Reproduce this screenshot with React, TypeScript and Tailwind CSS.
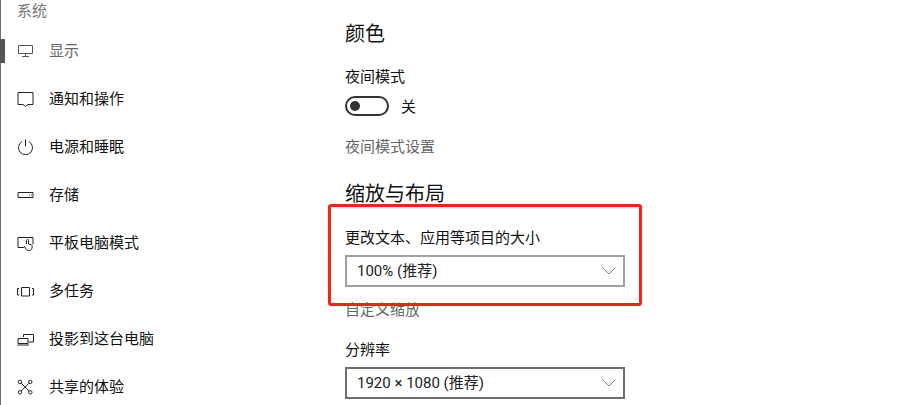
import { ChevronDown } from 'lucide-react'
import type { ReactNode } from 'react'

const stroke = { fill: 'none', stroke: 'currentColor', strokeWidth: 1 }

const navItems: { label: string; icon: ReactNode; active?: boolean }[] = [
  {
    label: '显示',
    active: true,
    icon: <path d="M1.500 2.500h14v8h-14zM8.500 10.500v2.500M5 13.500h7" />,
  },
  {
    label: '通知和操作',
    icon: <path d="M1 1.500h15v12h-5l-2.500 2-2.500-2H1z" />,
  },
  {
    label: '电源和睡眠',
    icon: <path d="M8.500 .5v7M5 2.600a7 7 0 1 0 7 0" />,
  },
  {
    label: '存储',
    icon: <path d="M1 5.500h15v5H1zM12 8h.8M14 8h.8" />,
  },
  {
    label: '平板电脑模式',
    icon: <path d="M7 12.500H1V2.500h15v7M9.500 9V5.500a1 1 0 0 1 2 0V9l2.500.7c1 .3 1.200 1 1.200 2 0 2-1 3.800-3.400 3.800-2 0-2.800-1-3.400-2.200L7.500 11" />,
  },
  {
    label: '多任务',
    icon: <path d="M4.500 4.500h8v8.500h-8zM2 5.500H.5v6.500H2M15 5.500h1.500v6.500H15" />,
  },
  {
    label: '投影到这台电脑',
    icon: <path d="M6.500 6V3.500h10v7.500h-5M1 7.500h10v5H1zM.5 14h11.500" />,
  },
  {
    label: '共享的体验',
    icon: (
      <>
        <circle cx="2.900" cy="2.900" r="1.700" />
        <circle cx="13.300" cy="2.900" r="1.700" />
        <circle cx="2.900" cy="13.300" r="1.700" />
        <circle cx="13.300" cy="13.300" r="1.700" />
        <path d="M4.200 4.200l7.800 7.800M12 4.200l-7.800 7.800" />
      </>
    ),
  },
]

function Select({ value, muted }: { value: string; muted?: boolean }) {
  return (
    <div className={`flex h-8 w-[280px] items-center justify-between border-2 pl-[10px] pr-[2px] text-[15px] text-[#222] ${muted ? 'border-[#a0a0a0]' : 'border-[#6e6e6e]'}`}>
      <span>{value}</span>
      <ChevronDown size={24} strokeWidth={0.9} className="text-[#777]" />
    </div>
  )
}

export default function App() {
  return (
    <div className="relative flex h-[405px] w-[902px] overflow-hidden bg-white font-['Roboto','Noto_Sans_CJK_SC',sans-serif] text-[15px] text-[#111]">
      <aside className="w-[345px] shrink-0 border-l border-[#707070]">
        <div className="flex h-[27px] items-center pb-[5px] pl-4 leading-none text-[#777]">系统</div>
        {navItems.map(({ label, icon, active }) => (
          <div key={label} className="flex h-12 items-center">
            <div className={`-ml-px mr-3 h-6 w-[5px] ${active ? 'bg-[#555]' : ''}`} />
            <svg width="17" height="16" viewBox="0 0 17 16" {...stroke} className={active ? 'text-[#555]' : 'text-[#222]'}>
              {icon}
            </svg>
            <span className={`ml-[15px] ${active ? 'text-[#666]' : ''}`}>{label}</span>
          </div>
        ))}
      </aside>

      <main className="flex-1">
        <h2 className="mt-[20px] text-[20px] font-normal leading-7">颜色</h2>
        <div className="mt-[19px] leading-5">夜间模式</div>
        <div className="mt-[9px] flex h-5 items-center">
          <div className="flex h-5 w-11 items-center rounded-full border-2 border-[#333] px-[3px]">
            <div className="h-[10px] w-[10px] rounded-full bg-[#333]" />
          </div>
          <span className="ml-3 pt-[2px]">关</span>
        </div>
        <div className="mt-[21px] leading-5 text-[#666]">夜间模式设置</div>
        <h2 className="mt-[23px] text-[20px] font-normal leading-7">缩放与布局</h2>
        <div className="mt-[20px] leading-5">更改文本、应用等项目的大小</div>
        <div className="mt-[7px]">
          <Select value="100% (推荐)" muted />
        </div>
        <div className="mt-[13px] leading-5 text-[#666]">自定义缩放</div>
        <div className="mt-[20px] leading-5">分辨率</div>
        <div className="mt-[7px]">
          <Select value="1920 × 1080 (推荐)" />
        </div>
      </main>

      <div className="absolute left-[328px] top-[204px] h-[102px] w-[314px] rounded-[3px] border-[3px] border-[#ff2014]" />
    </div>
  )
}
